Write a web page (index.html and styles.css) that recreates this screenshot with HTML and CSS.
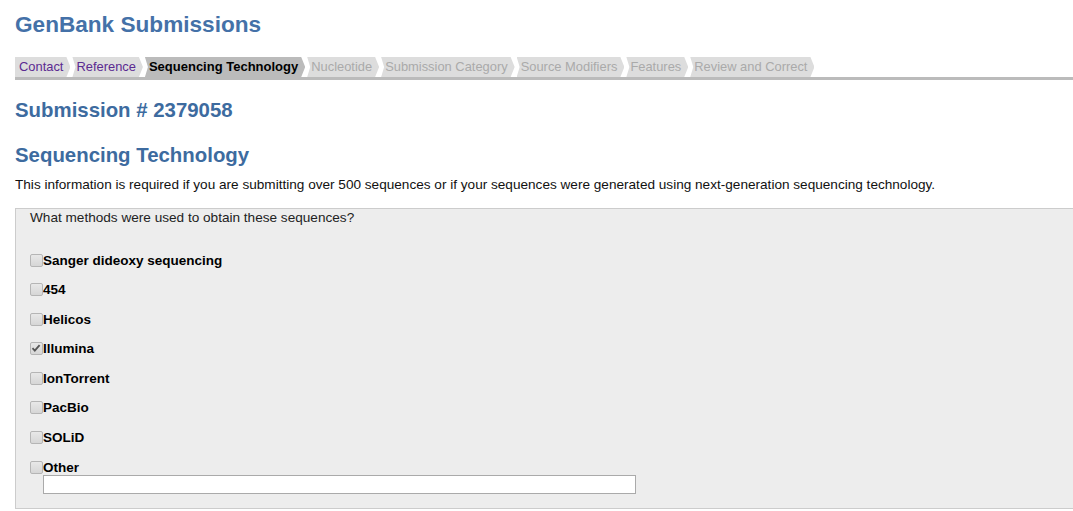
FILE: index.html
```html
<!DOCTYPE html>
<html>
<head>
<meta charset="utf-8">
<title>GenBank Submissions</title>
<link rel="stylesheet" href="styles.css">
</head>
<body>
<h1 class="title">GenBank Submissions</h1>
<nav class="steps">
  <a class="step done first">Contact</a>
  <a class="step done">Reference</a>
  <a class="step current">Sequencing Technology</a>
  <a class="step todo">Nucleotide</a>
  <a class="step todo">Submission Category</a>
  <a class="step todo">Source Modifiers</a>
  <a class="step todo">Features</a>
  <a class="step todo">Review and Correct</a>
</nav>
<h2 class="heading sub-id">Submission # 2379058</h2>
<h2 class="heading section">Sequencing Technology</h2>
<p class="intro">This information is required if you are submitting over 500 sequences or if your sequences were generated using next-generation sequencing technology.</p>
<div class="panel">
  <div class="question">What methods were used to obtain these sequences?</div>
  <div class="options">
    <label class="opt"><span class="cb"></span>Sanger dideoxy sequencing</label>
    <label class="opt"><span class="cb"></span>454</label>
    <label class="opt"><span class="cb"></span>Helicos</label>
    <label class="opt"><span class="cb checked"><svg viewBox="0 0 12 12" width="12" height="12"><path d="M2.5 6.2 L4.8 8.6 L9.6 3.2" fill="none" stroke="#555" stroke-width="1.8"/></svg></span>Illumina</label>
    <label class="opt"><span class="cb"></span>IonTorrent</label>
    <label class="opt"><span class="cb"></span>PacBio</label>
    <label class="opt"><span class="cb"></span>SOLiD</label>
    <div class="other">
      <label class="opt"><span class="cb"></span>Other</label>
      <input class="other-input" type="text">
    </div>
  </div>
</div>
</body>
</html>
```
FILE: styles.css
```css
html, body {
  margin: 0;
  padding: 0;
  overflow: hidden;
  background: #fff;
}
body {
  padding-left: 15px;
  font-family: "Liberation Sans", Arial, sans-serif;
  color: #111;
}
.title {
  margin: 11px 0 0;
  font-size: 22.6px;
  line-height: 28px;
  font-weight: bold;
  color: #4471a8;
}
.steps {
  margin-top: 18px;
  display: flex;
  gap: 2px;
  height: 20px;
  border-bottom: 3px solid #bbb;
}
.step {
  display: block;
  font-size: 12.9px;
  line-height: 20px;
  height: 20px;
  padding: 0 7px 0 4px;
  background: #ddd;
  color: #aaa;
  clip-path: polygon(0 0, calc(100% - 4px) 0, 100% 50%, calc(100% - 4px) 100%, 0 100%, 3px 50%);
}
.step.first {
  clip-path: polygon(0 0, calc(100% - 4px) 0, 100% 50%, calc(100% - 4px) 100%, 0 100%);
}
.step.done { color: #5b2a91; }
.step.current { background: #bbb; color: #000; font-weight: bold; font-size: 13px; }
.heading {
  margin: 0;
  font-size: 20.4px;
  line-height: 24px;
  font-weight: bold;
  color: #3d6b9f;
}
.sub-id { margin-top: 18px; }
.section { margin-top: 21px; }
.intro {
  margin: 9px 0 0;
  font-size: 13.6px;
  line-height: 18px;
  color: #111;
}
.panel {
  margin-top: 14px;
  margin-right: -20px;
  background: #ededed;
  border: 1px solid #ccc;
  border-right: none;
  padding: 0 14px 14px;
}
.question {
  font-size: 13.6px;
  line-height: 18px;
  color: #222;
}
.options {
  margin-top: 24px;
  display: flex;
  flex-direction: column;
  gap: 11.6px;
}
.opt {
  display: flex;
  align-items: center;
  height: 18px;
  font-size: 13.5px;
  font-weight: bold;
  color: #000;
}
.cb {
  width: 11px;
  height: 11px;
  border: 1px solid #b5b5b5;
  border-radius: 2px;
  background: linear-gradient(#e8e8e8, #d6d6d6);
  margin-right: 0;
  position: relative;
  flex: none;
}
.cb svg {
  position: absolute;
  left: -1px;
  top: -1px;
}
.other {
  display: flex;
  flex-direction: column;
}
.other-input {
  margin: -1px 0 0 13px;
  width: 593px;
  height: 19px;
  box-sizing: border-box;
  border: 1px solid #aaa;
  background: #fff;
  padding: 0;
}
```
